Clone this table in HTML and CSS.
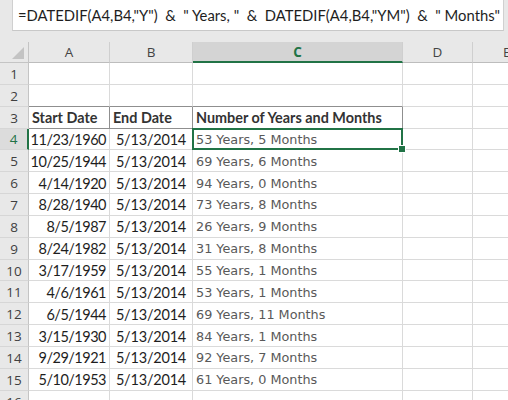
FILE: index.html
```html
<!DOCTYPE html>
<html>
<head>
<meta charset="utf-8">
<link rel="stylesheet" href="styles.css">
</head>
<body>
<div class="formula-wrap">
  <div class="formula">=DATEDIF(A4,B4,"Y")  &amp;  " Years, "  &amp;  DATEDIF(A4,B4,"YM")  &amp;  " Months"</div>
</div>
<div class="sheet">
  <div class="corner"><span class="tri"></span></div>
  <div class="ch">A</div>
  <div class="ch">B</div>
  <div class="ch ch-sel">C</div>
  <div class="ch">D</div>
  <div class="ch ch-last">E</div>

  <div class="rh">1</div><div class="c"></div><div class="c"></div><div class="c"></div><div class="c"></div><div class="c e"></div>
  <div class="rh">2</div><div class="c tb"></div><div class="c tb"></div><div class="c tb"></div><div class="c"></div><div class="c e"></div>
  <div class="rh">3</div><div class="c th">Start Date</div><div class="c th">End Date</div><div class="c th">Number of Years and Months</div><div class="c"></div><div class="c e"></div>
  <div class="rh rh-sel">4</div><div class="c d">11/23/1960</div><div class="c d m">5/13/2014</div><div class="c r sel">53 Years, 5 Months<span class="handle"></span></div><div class="c"></div><div class="c e"></div>
  <div class="rh">5</div><div class="c d">10/25/1944</div><div class="c d m">5/13/2014</div><div class="c r">69 Years, 6 Months</div><div class="c"></div><div class="c e"></div>
  <div class="rh">6</div><div class="c d">4/14/1920</div><div class="c d m">5/13/2014</div><div class="c r">94 Years, 0 Months</div><div class="c"></div><div class="c e"></div>
  <div class="rh">7</div><div class="c d">8/28/1940</div><div class="c d m">5/13/2014</div><div class="c r">73 Years, 8 Months</div><div class="c"></div><div class="c e"></div>
  <div class="rh">8</div><div class="c d">8/5/1987</div><div class="c d m">5/13/2014</div><div class="c r">26 Years, 9 Months</div><div class="c"></div><div class="c e"></div>
  <div class="rh">9</div><div class="c d">8/24/1982</div><div class="c d m">5/13/2014</div><div class="c r">31 Years, 8 Months</div><div class="c"></div><div class="c e"></div>
  <div class="rh">10</div><div class="c d">3/17/1959</div><div class="c d m">5/13/2014</div><div class="c r">55 Years, 1 Months</div><div class="c"></div><div class="c e"></div>
  <div class="rh">11</div><div class="c d">4/6/1961</div><div class="c d m">5/13/2014</div><div class="c r">53 Years, 1 Months</div><div class="c"></div><div class="c e"></div>
  <div class="rh">12</div><div class="c d">6/5/1944</div><div class="c d m">5/13/2014</div><div class="c r">69 Years, 11 Months</div><div class="c"></div><div class="c e"></div>
  <div class="rh">13</div><div class="c d">3/15/1930</div><div class="c d m">5/13/2014</div><div class="c r">84 Years, 1 Months</div><div class="c"></div><div class="c e"></div>
  <div class="rh">14</div><div class="c d">9/29/1921</div><div class="c d m">5/13/2014</div><div class="c r">92 Years, 7 Months</div><div class="c"></div><div class="c e"></div>
  <div class="rh">15</div><div class="c d">5/10/1953</div><div class="c d m">5/13/2014</div><div class="c r">61 Years, 0 Months</div><div class="c"></div><div class="c e"></div>
  <div class="rh">16</div><div class="c"></div><div class="c"></div><div class="c"></div><div class="c"></div><div class="c e"></div>
</div>
</body>
</html>
```

FILE: styles.css
```css
html, body {
  margin: 0;
  padding: 0;
  width: 508px;
  height: 400px;
  overflow: hidden;
  background: #e8e8e8;
}

.formula-wrap {
  height: 42px;
  box-sizing: border-box;
  padding: 0 4px 11px 12px;
  background: #e8e8e8;
}

.formula {
  height: 31px;
  box-sizing: border-box;
  background: #ffffff;
  border-left: 1px solid #d0d0d0;
  border-right: 1px solid #d0d0d0;
  border-bottom: 1px solid #c8c8c8;
  padding: 6px 0 0 5px;
  white-space: pre;
  font-family: Lato, "Liberation Sans", sans-serif;
  font-size: 14.8px;
  color: #1e1e1e;
  overflow: hidden;
}

.sheet {
  display: grid;
  grid-template-columns: 29px 81px 83px 210px 70px 1fr;
  grid-template-rows: 21px;
  grid-auto-rows: 21.85px;
  background: #ffffff;
}

.corner {
  background: #e8e8e8;
  border-right: 1px solid #c4c4c4;
  border-bottom: 1px solid #c4c4c4;
  box-sizing: border-box;
  position: relative;
}

.tri {
  position: absolute;
  right: 4px;
  bottom: 3px;
  width: 0;
  height: 0;
  border-left: 12px solid transparent;
  border-bottom: 12px solid #c3c3c3;
}

.ch {
  background: #e8e8e8;
  border-right: 1px solid #cfcfcf;
  border-bottom: 1px solid #bdbdbd;
  box-sizing: border-box;
  display: flex;
  align-items: center;
  justify-content: center;
  font-family: "Open Sans", "Liberation Sans", sans-serif;
  font-size: 13.5px;
  color: #444444;
}

.ch-last {
  border-right: none;
  justify-content: flex-start;
  padding-left: 30px;
}

.ch-sel {
  background: #d4d4d4;
  border-bottom: 2px solid #217346;
  color: #217346;
  font-weight: 700;
}

.rh {
  background: #e8e8e8;
  border-right: 1px solid #c4c4c4;
  border-bottom: 1px solid #d6d6d6;
  box-sizing: border-box;
  display: flex;
  align-items: center;
  justify-content: center;
  padding-top: 1px;
  font-family: "Open Sans", "Liberation Sans", sans-serif;
  font-size: 13.5px;
  color: #3f3f3f;
}

.rh-sel {
  color: #217346;
  background: #dcdcdc;
  border-right: 2px solid #217346;
}

.c {
  border-right: 1px solid #dadada;
  border-bottom: 1px solid #dadada;
  box-sizing: border-box;
  display: flex;
  align-items: center;
  padding-top: 1px;
  white-space: nowrap;
  overflow: visible;
  font-family: Lato, "Liberation Sans", sans-serif;
  font-size: 14.5px;
  color: #1e1e1e;
}

.e {
  border-right: none;
}

.tb {
  border-bottom-color: #8f8f8f;
}

.th {
  font-weight: 700;
  color: #333333;
  padding-left: 3px;
  font-size: 14.4px;
  border-right-color: #8f8f8f;
  border-bottom-color: #8f8f8f;
}

.d {
  justify-content: flex-end;
  padding-right: 3px;
  letter-spacing: -0.5px;
}

.m {
  justify-content: center;
  padding-right: 0;
  letter-spacing: -0.2px;
}

.r {
  padding-left: 3px;
  font-family: "DejaVu Sans", sans-serif;
  font-size: 12.8px;
  color: #595959;
}

.sel {
  position: relative;
}

.sel::after {
  content: "";
  position: absolute;
  left: -1px;
  top: -1px;
  right: -1px;
  bottom: -1px;
  border: 2px solid #217346;
  pointer-events: none;
}

.handle {
  position: absolute;
  right: -4px;
  bottom: -4px;
  width: 6px;
  height: 6px;
  background: #217346;
  border: 1px solid #ffffff;
  z-index: 2;
}
```
